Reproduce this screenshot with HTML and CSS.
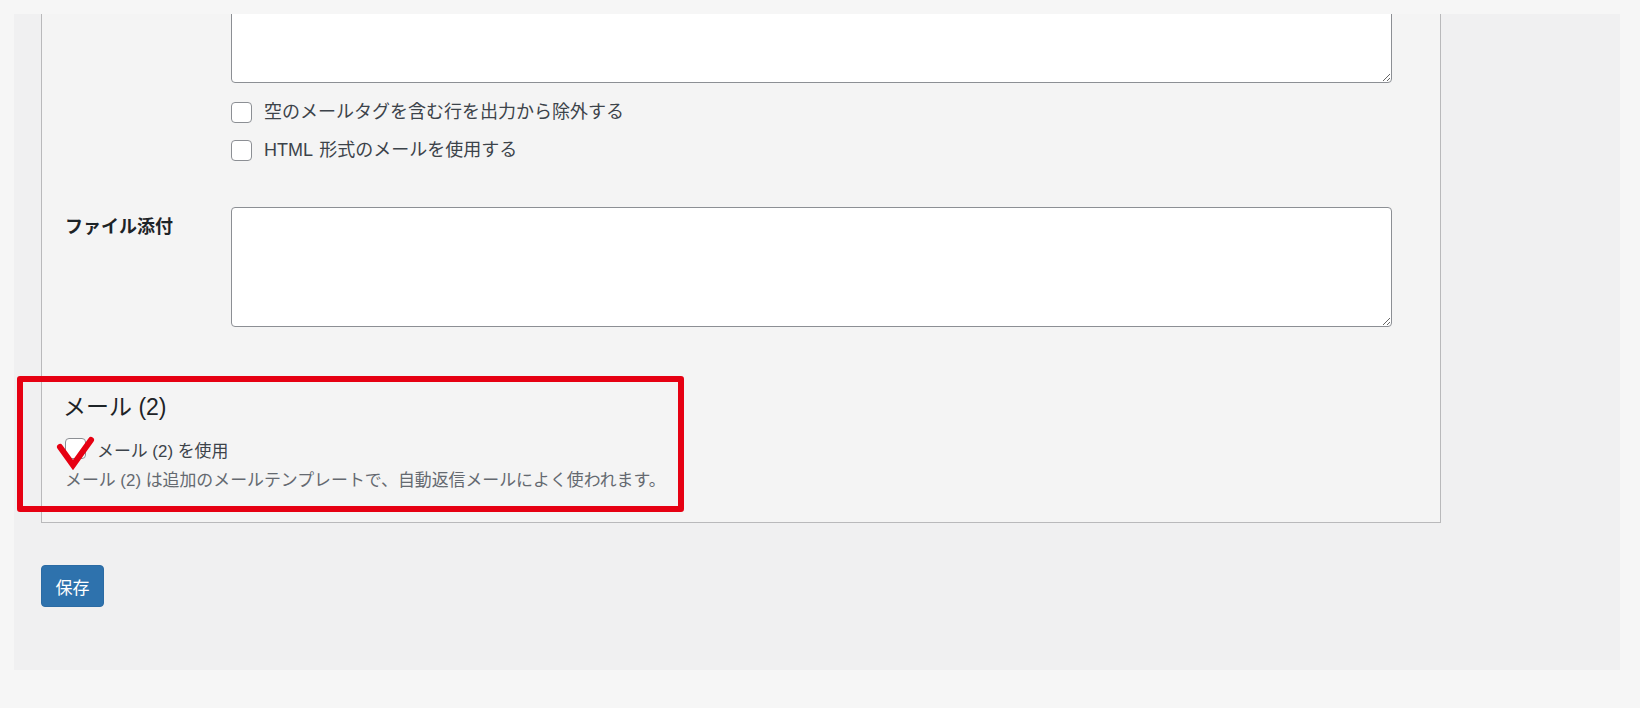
FILE: index.html
```html
<!DOCTYPE html>
<html lang="ja">
<head>
<meta charset="utf-8">
<title>メール設定</title>
<link rel="stylesheet" href="styles.css">
</head>
<body>
<div class="frame">
  <div class="panel">
    <div class="row">
      <div class="th"></div>
      <div class="td">
        <textarea class="ta"></textarea>
        <label class="check first"><input type="checkbox"><span>空のメールタグを含む行を出力から除外する</span></label>
        <label class="check second"><input type="checkbox"><span>HTML 形式のメールを使用する</span></label>
      </div>
    </div>
    <div class="row attach">
      <div class="th">ファイル添付</div>
      <div class="td"><textarea class="ta"></textarea></div>
    </div>
    <h2 class="section-title">メール (2)</h2>
    <label class="check use"><input type="checkbox"><span>メール (2) を使用</span></label>
    <p class="desc">メール (2) は追加のメールテンプレートで、自動返信メールによく使われます。</p>
  </div>
  <button class="save" type="button">保存</button>
  <div class="highlight"></div>
  <svg class="mark" width="40" height="36" viewBox="0 0 40 36"><polyline points="4,12 17,30 35,5" fill="none" stroke="#e60012" stroke-width="6" stroke-linejoin="miter" stroke-linecap="round"/></svg>
</div>
</body>
</html>
```

FILE: styles.css
```css
html, body {
  margin: 0;
  padding: 0;
}
body {
  background: #f6f6f6;
  font-family: "Liberation Sans", "Noto Sans CJK JP", sans-serif;
  color: #3c434a;
}
.frame {
  position: relative;
  margin: 14px 20px 0 14px;
  height: 656px;
  background: #f0f0f1;
  overflow: hidden;
  padding-left: 27px;
}
.panel {
  box-sizing: border-box;
  width: 1400px;
  margin-top: -52px;
  background: #f4f4f4;
  border: 1px solid #b9b9bb;
  padding: 0 0 29px 23px;
}
.row {
  display: flex;
}
.th {
  width: 166px;
  flex: none;
  font-size: 18px;
  line-height: 27px;
  font-weight: 700;
  color: #1d2327;
}
.td {
  flex: none;
}
.ta {
  display: block;
  box-sizing: border-box;
  width: 1161px;
  height: 120px;
  margin: 0;
  background: #fff;
  border: 1px solid #8c8f94;
  border-radius: 4px;
  resize: both;
}
.check {
  display: flex;
  align-items: center;
  gap: 12px;
  font-size: 18px;
  line-height: 27px;
  color: #3c434a;
}
.check input {
  appearance: none;
  -webkit-appearance: none;
  width: 21px;
  height: 21px;
  margin: 0;
  background: #fff;
  border: 1px solid #8c8f94;
  border-radius: 4px;
  flex: none;
}
.check.first {
  margin-top: 16px;
}
.check.second {
  margin-top: 11px;
  word-spacing: 2px;
}
.attach {
  margin-top: 43px;
}
.attach .th {
  padding-top: 7px;
}
.section-title {
  margin: 65px 0 0 -2px;
  font-size: 23px;
  line-height: 30px;
  font-weight: 400;
  color: #1d2327;
}
.check.use {
  margin-top: 13px;
  align-items: flex-start;
  gap: 11px;
  font-size: 16.9px;
}
.check.use input {
  margin-top: 3px;
}
.check.use span {
  padding-top: 3px;
}
.desc {
  margin: 3px 0 0;
  font-size: 16.9px;
  line-height: 25px;
  color: #646970;
}
.save {
  display: block;
  margin-top: 42px;
  width: 63px;
  height: 42px;
  padding: 0;
  background: #2e72ad;
  border: 1px solid #2b6ba4;
  border-radius: 4px;
  color: #fff;
  font-family: "Liberation Sans", "Noto Sans CJK JP", sans-serif;
  font-size: 17px;
}
.highlight {
  position: absolute;
  left: 3px;
  top: 362px;
  width: 667px;
  height: 136px;
  box-sizing: border-box;
  border: 6px solid #e60012;
  border-radius: 3px;
}
.mark {
  position: absolute;
  left: 42px;
  top: 421px;
}
```
